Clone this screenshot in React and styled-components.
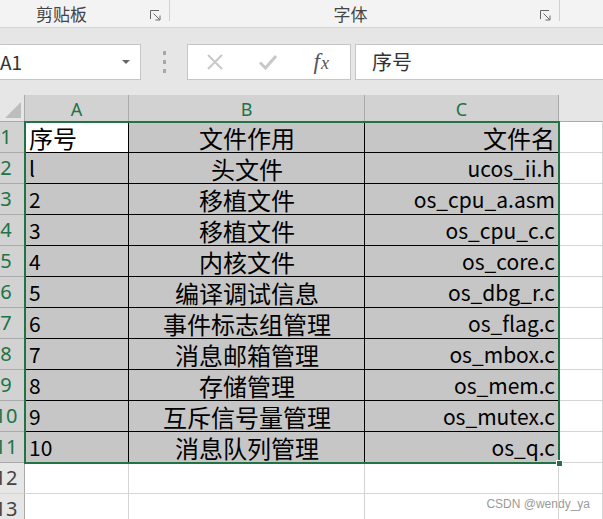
import styled, { createGlobalStyle } from "styled-components";

const GlobalStyle = createGlobalStyle`
  html, body {
    margin: 0;
    padding: 0;
    background: #ffffff;
  }
  * {
    box-sizing: border-box;
  }
`;

const CJK = `"Noto Sans CJK SC", "Noto Sans", sans-serif`;
const GREEN = "#217346";

const rows = [
    ["序号", "文件作用", "文件名"],
    ["l", "头文件", "ucos_ii.h"],
    ["2", "移植文件", "os_cpu_a.asm"],
    ["3", "移植文件", "os_cpu_c.c"],
    ["4", "内核文件", "os_core.c"],
    ["5", "编译调试信息", "os_dbg_r.c"],
    ["6", "事件标志组管理", "os_flag.c"],
    ["7", "消息邮箱管理", "os_mbox.c"],
    ["8", "存储管理", "os_mem.c"],
    ["9", "互斥信号量管理", "os_mutex.c"],
    ["10", "消息队列管理", "os_q.c"],
];

function Launcher() {
    return (
        <svg width="11" height="11" viewBox="0 0 11 11">
            <path d="M0.5 9V0.5H9" fill="none" stroke="#666" strokeWidth="1" />
            <path d="M3.5 3.5L9.5 9.5" stroke="#666" strokeWidth="1" />
            <path d="M10 5.5V10H5.5" fill="none" stroke="#666" strokeWidth="1" />
        </svg>
    );
}

function App() {
    return (
        <Page>
            <GlobalStyle />
            <Ribbon>
                <Group $width={170}>
                    <GroupLabel $pad={26}>剪贴板</GroupLabel>
                    <LauncherBox>
                        <Launcher />
                    </LauncherBox>
                </Group>
                <Group $width={390}>
                    <GroupLabel $pad={8}>字体</GroupLabel>
                    <LauncherBox>
                        <Launcher />
                    </LauncherBox>
                </Group>
            </Ribbon>

            <FormulaBar>
                <NameBox>
                    <span>A1</span>
                    <DropArrow />
                </NameBox>
                <Dots>
                    <i />
                    <i />
                    <i />
                </Dots>
                <ButtonsBox>
                    <FxButton>
                        <svg width="18" height="18" viewBox="0 0 18 18">
                            <path d="M2 2L16 16M16 2L2 16" stroke="#c8c8c8" strokeWidth="2" />
                        </svg>
                    </FxButton>
                    <FxButton>
                        <svg width="20" height="18" viewBox="0 0 20 18">
                            <path d="M2 9.5L7.5 15L18 3" fill="none" stroke="#c8c8c8" strokeWidth="3" />
                        </svg>
                    </FxButton>
                    <FxButton>
                        <FxText>
                            f<em>x</em>
                        </FxText>
                    </FxButton>
                </ButtonsBox>
                <FormulaInput>序号</FormulaInput>
            </FormulaBar>

            <GridWrap>
                <Grid>
                    <Corner>
                        <svg width="20" height="20" viewBox="0 0 20 20">
                            <path d="M19 3V19H3Z" fill="#bdbdbd" />
                        </svg>
                    </Corner>
                    <ColHead $selected>A</ColHead>
                    <ColHead $selected>B</ColHead>
                    <ColHead $selected>C</ColHead>
                    <ColHead />

                    {rows.map((r, i) => (
                        <RowFragment key={i} index={i + 1} data={r} />
                    ))}

                    {[12, 13].map((n) => (
                        <EmptyRow key={n} n={n} />
                    ))}
                </Grid>
                <Selection>
                    <FillHandle />
                </Selection>
            </GridWrap>

            <Watermark>CSDN @wendy_ya</Watermark>
        </Page>
    );
}

function RowFragment({ index, data }) {
    const header = index === 1;
    return (
        <>
            <RowHead $selected>
                <span>{index}</span>
            </RowHead>
            <Cell $align="left" $active={header} $latin={!header}>
                {data[0]}
            </Cell>
            <Cell $align="center">{data[1]}</Cell>
            <Cell $align="right" $latin={!header}>
                {data[2]}
            </Cell>
            <Blank />
        </>
    );
}

function EmptyRow({ n }) {
    return (
        <>
            <RowHead>
                <span>{n}</span>
            </RowHead>
            <Blank />
            <Blank />
            <Blank />
            <Blank />
        </>
    );
}

export default App;

const Page = styled.div`
    position: relative;
    width: 603px;
    height: 519px;
    overflow: hidden;
    background: #ffffff;
    font-family: ${CJK};
`;

const Ribbon = styled.div`
    display: flex;
    height: 28px;
    background: #f3f3f3;
    border-bottom: 1px solid #d4d4d4;
`;

const Group = styled.div`
    display: flex;
    align-items: flex-start;
    width: ${(p) => p.$width}px;
    height: 21px;
    border-right: 1px solid #d0d0d0;
`;

const GroupLabel = styled.div`
    flex: 1;
    text-align: center;
    padding-right: ${(p) => p.$pad}px;
    font-size: 17px;
    line-height: 22px;
    margin-top: 3px;
    color: #444;
`;

const LauncherBox = styled.div`
    width: 20px;
    display: flex;
    justify-content: flex-start;
    padding-top: 10px;
    padding-left: 1px;
`;

const FormulaBar = styled.div`
    display: flex;
    align-items: center;
    height: 67px;
    background: #e6e6e6;
`;

const NameBox = styled.div`
    display: flex;
    align-items: center;
    justify-content: space-between;
    margin-left: -4px;
    width: 145px;
    height: 36px;
    padding: 0 10px 0 3px;
    background: #ffffff;
    border: 1px solid #c6c6c6;
    font-size: 19px;
    color: #333;
`;

const DropArrow = styled.div`
    width: 0;
    height: 0;
    border-left: 4px solid transparent;
    border-right: 4px solid transparent;
    border-top: 4px solid #666;
`;

const Dots = styled.div`
    display: flex;
    flex-direction: column;
    align-items: center;
    gap: 5px;
    width: 46px;

    i {
        display: block;
        width: 3px;
        height: 4px;
        background: #a8a8a8;
    }
`;

const ButtonsBox = styled.div`
    display: flex;
    align-items: center;
    justify-content: space-around;
    width: 164px;
    height: 36px;
    padding: 0 2px 0 0;
    background: #ffffff;
    border: 1px solid #c6c6c6;
`;

const FxButton = styled.div`
    width: 40px;
    display: flex;
    justify-content: center;
    align-items: center;
`;

const FxText = styled.span`
    font-family: "Liberation Serif", "DejaVu Serif", serif;
    font-style: italic;
    font-size: 23px;
    color: #555;

    em {
        font-size: 18px;
        margin-left: 1px;
    }
`;

const FormulaInput = styled.div`
    flex: 1;
    margin-left: 4px;
    margin-right: -4px;
    height: 36px;
    padding-left: 16px;
    background: #ffffff;
    border: 1px solid #c6c6c6;
    font-size: 20px;
    line-height: 34px;
    color: #333;
`;

const GridWrap = styled.div`
    position: relative;
`;

const Grid = styled.div`
    display: grid;
    grid-template-columns: 25px 104px 236px 194px 1fr;
    grid-template-rows: 27px repeat(13, 31px);
`;

const Corner = styled.div`
    display: flex;
    align-items: flex-end;
    justify-content: flex-end;
    padding: 0 2px 2px 0;
    background: #e6e6e6;
    border-right: 1px solid #ababab;
    border-bottom: 1px solid #ababab;
`;

const ColHead = styled.div`
    display: flex;
    align-items: center;
    justify-content: center;
    background: ${(p) => (p.$selected ? "#d2d2d2" : "#e6e6e6")};
    border-right: 1px solid ${(p) => (p.$selected ? "#ababab" : "#e6e6e6")};
    border-bottom: 1px solid #ababab;
    color: ${(p) => (p.$selected ? GREEN : "#444")};
    font-family: "Noto Sans", sans-serif;
    font-size: 18px;
    padding-top: 1px;
`;

const RowHead = styled.div`
    overflow: hidden;
    background: ${(p) => (p.$selected ? "#d2d2d2" : "#e6e6e6")};
    border-right: 1px solid #ababab;
    border-bottom: 1px solid ${(p) => (p.$selected ? "#ababab" : "#d4d4d4")};
    color: ${(p) => (p.$selected ? GREEN : "#444")};
    font-family: "Noto Sans", sans-serif;
    font-size: 20px;

    span {
        display: block;
        width: 38px;
        margin-left: -13px;
        text-align: center;
        line-height: 30px;
    }
`;

const Cell = styled.div`
    display: flex;
    align-items: center;
    justify-content: ${(p) =>
        p.$align === "left" ? "flex-start" : p.$align === "right" ? "flex-end" : "center"};
    background: ${(p) => (p.$active ? "#ffffff" : "#c6c6c6")};
    border-right: 1px solid #000;
    border-bottom: 1px solid #000;
    padding: 1px 3px 0 4px;
    font-size: ${(p) => (p.$latin ? "21px" : "24px")};
    line-height: 1;
    color: #000;
    white-space: nowrap;
`;

const Blank = styled.div`
    background: #ffffff;
    border-right: 1px solid #d4d4d4;
    border-bottom: 1px solid #d4d4d4;
`;

const Selection = styled.div`
    position: absolute;
    left: 24px;
    top: 26px;
    width: 536px;
    height: 343px;
    border: 2px solid ${GREEN};
    pointer-events: none;
`;

const FillHandle = styled.div`
    position: absolute;
    right: -5px;
    bottom: -5px;
    width: 7px;
    height: 7px;
    background: ${GREEN};
    border: 1px solid #fff;
`;

const Watermark = styled.div`
    position: absolute;
    right: 13px;
    bottom: 8px;
    font-family: "Liberation Sans", sans-serif;
    font-size: 12px;
    color: #9a9a9a;
    text-shadow: 0 0 1px #fff;
`;
